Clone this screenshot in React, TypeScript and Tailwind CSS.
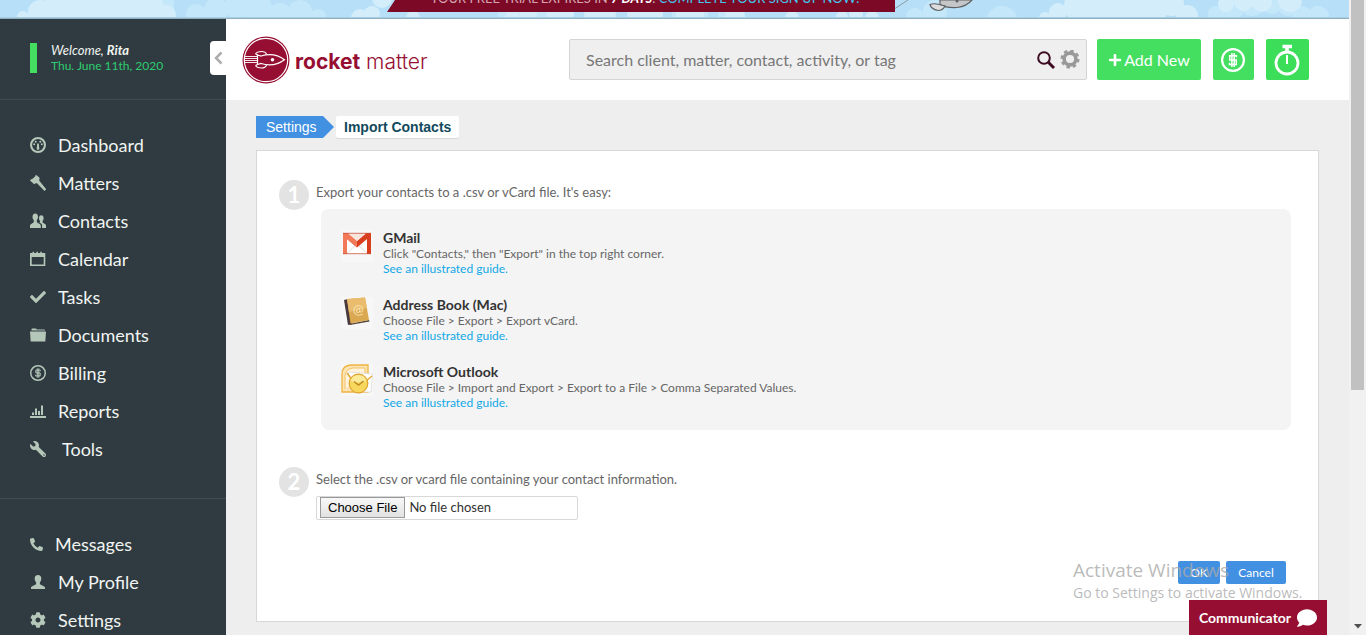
import type { ReactNode } from "react";
import { FaPlus, FaCheck, FaWrench, FaPhoneAlt, FaCog, FaComment } from "react-icons/fa";

type Item = { label: string; icon: ReactNode };

const icon = "size-4 shrink-0 fill-current";

const DashboardIcon = () => (
  <svg viewBox="0 0 16 16" className={icon} aria-hidden="true">
    <path fillRule="evenodd" d="M8 0a8 8 0 1 1 0 16A8 8 0 0 1 8 0Zm0 2.1a5.9 5.9 0 1 0 0 11.8A5.9 5.9 0 0 0 8 2.1Z" />
    <path d="M7.2 6.4h1.6l.5 5.2a1.3 1.3 0 0 1-2.6 0Z" />
    <circle cx="5.7" cy="4.7" r="1" />
    <circle cx="10.3" cy="4.7" r="1" />
    <circle cx="4.2" cy="7.2" r="1" />
    <circle cx="11.8" cy="7.2" r="1" />
  </svg>
);
const HammerIcon = () => (
  <svg viewBox="0 0 16 16" className={icon} aria-hidden="true">
    <path d="M6.300 0 9.800 3 9.300 4 9.300 5.700 16.200 14.200 14.500 16 7 8.300 5.600 8.300 4.200 9.200 0 5.600 1 4.300 1.900 4.300 5.100 1.600 5.200.7Z" />
  </svg>
);
const UsersIcon = () => (
  <svg viewBox="0 0 16 16" className={icon} aria-hidden="true">
    <path d="M5.2.5C7 .5 8 1.8 8 3.8c0 1.600-.5 2.500-1.200 3.300v2.200l3.200 2c.6.4.8.8.8 1.500V15H0v-2.200c0-.7.200-1.100.8-1.500l3-2V7.100C3 6.300 2.500 5.400 2.500 3.800 2.500 1.800 3.500.5 5.200.5Z" />
    <path d="M11.300 2.300c1.500 0 2.300 1.100 2.300 2.800 0 1.300-.4 2.100-1 2.800v1.700l2.700 1.700c.5.300.7.700.7 1.200V15h-3.900v-2.700c0-.8-.4-1.500-1.100-1.900L9.300 9.500 10 9V7.900c-.6-.7-1-1.500-1-2.800 0-1.700.8-2.800 2.300-2.800Z" />
  </svg>
);
const CalendarIcon = () => (
  <svg viewBox="0 0 16 16" className={icon} aria-hidden="true">
    <path fillRule="evenodd" d="M0 2h2.500V.7h1.600V2h2.300V.7H8V2h2.300V.7h1.600V2H15.300V15H0ZM1.700 6v7.500h12V6Z" />
  </svg>
);
const FolderIcon = () => (
  <svg viewBox="0 0 16 16" className={icon} aria-hidden="true">
    <path d="M1.300 3.500 1.800 1.500H6l.8 1h7.800l.4 1Z" />
    <path d="M0 4.400h16L15.300 14.500H.7Z" />
  </svg>
);
const DollarIcon = ({ className }: { className: string }) => (
  <svg viewBox="0 0 24 24" className={className} fill="none" stroke="currentColor" aria-hidden="true">
    <circle cx="12" cy="12" r="10.900" strokeWidth="2.200" />
    <path d="M15.400 9.200V7.700H8.700v4.200h6.600v4.500H8.500V14.700M10.900 5v14M13.200 5v14" strokeWidth="1.500" />
  </svg>
);
const ChartIcon = () => (
  <svg viewBox="0 0 16 16" className={icon} aria-hidden="true">
    <path d="M0 13h16v2H0ZM2 9.500h2V12H2ZM5 5.500h2V12H5ZM8 8h2v4H8ZM11 2.500h2V12h-2Z" />
  </svg>
);
const UserIcon = () => (
  <svg viewBox="0 0 16 16" className={icon} aria-hidden="true">
    <path d="M8 1c2.200 0 3.300 1.500 3.300 3.500 0 1.800-.6 3-1.400 3.800v1.900l4.300 2.300c.6.300.8.800.8 1.400V15H1v-1.100c0-.6.200-1.100.8-1.400l4.300-2.300V8.300C5.300 7.500 4.700 6.300 4.700 4.500 4.700 2.500 5.800 1 8 1Z" />
  </svg>
);

const primary: Item[] = [
  { label: "Dashboard", icon: <DashboardIcon /> },
  { label: "Matters", icon: <HammerIcon /> },
  { label: "Contacts", icon: <UsersIcon /> },
  { label: "Calendar", icon: <CalendarIcon /> },
  { label: "Tasks", icon: <FaCheck className="size-4" /> },
  { label: "Documents", icon: <FolderIcon /> },
  { label: "Billing", icon: <DollarIcon className="size-4" /> },
  { label: "Reports", icon: <ChartIcon /> },
  { label: "Tools", icon: <FaWrench className="mr-1 size-4 -scale-x-100" /> },
];
const secondary: Item[] = [
  { label: "Messages", icon: <FaPhoneAlt className="size-[13px]" /> },
  { label: "My Profile", icon: <UserIcon /> },
  { label: "Settings", icon: <FaCog className="size-4" /> },
];

const Nav = ({ items, label }: { items: Item[]; label: string }) => (
  <nav aria-label={label}>
    {items.map((i) => (
      <a key={i.label} href="#" className="flex h-[38px] items-center gap-3 pl-[30px] text-[18px] text-[#f1f4f2]">
        <span className="text-[#b5c7b9]">{i.icon}</span>
        {i.label}
      </a>
    ))}
  </nav>
);

type Puff = [x: number, y: number, r: number];

const farPuffs: Puff[] = [
  [160, 4, 14], [196, 14, 10], [216, 10, 12], [238, 6, 13], [258, 8, 14], [280, 14, 11], [300, 12, 12], [318, 17, 8],
  [510, 14, 12], [535, 10, 14], [690, 12, 18], [730, 15, 12],
  [915, 17, 9], [935, 12, 12], [1002, 22, 16], [1216, 14, 8], [1232, 8, 12], [1252, 4, 12], [1272, 4, 10], [1288, 6, 10], [1318, 17, 11], [1302, 16, 10],
];
const nearPuffs: Puff[] = [
  [23, 17, 6], [40, 12, 12], [62, 4, 18], [80, 10, 16], [104, 8, 18], [126, 8, 16], [150, 8, 14], [166, 15, 10],
  [382, -2, 10], [413, 18, 7], [360, 18, 9], [372, 14, 8],
  [512, 17, 7], [528, 13, 9], [560, 12, 14], [600, 12, 16], [645, 12, 18], [690, 14, 14], [735, 16, 10],
  [792, 18, 7], [842, 17, 6], [856, 13, 7], [872, 18, 7],
  [1045, 18, 6], [1058, 12, 9], [1080, 6, 16], [1102, 10, 15], [1128, 4, 18], [1152, 8, 16], [1172, 4, 12], [1187, 16, 11],
  [1226, 4, 8], [1244, 1, 10], [1262, 2, 10], [1290, 0, 12],
];

const Clouds = () => (
  <svg className="absolute inset-0 h-full w-full" viewBox="0 0 1349 19" preserveAspectRatio="none" aria-hidden="true">
    <rect width="1349" height="19" fill="#b7e0f8" />
    {farPuffs.map(([x, y, r], i) => <circle key={i} cx={x} cy={y} r={r} fill="#c5e7fa" />)}
    {nearPuffs.map(([x, y, r], i) => <circle key={i} cx={x} cy={y} r={r} fill="#d3edfb" />)}
    <path d="M895 8.500 908 0" stroke="#8997a0" />
    <path d="M940 0h32q-5 6-15 7.500-12 .5-17-3Z" fill="#c4c6c8" stroke="#5f6163" strokeWidth="1.200" />
    <path d="M930 4.500q4-1.500 9 0l6 1.500q-2 4.500-7 4.500-7-1.500-8-6Z" fill="#dcdddf" stroke="#5f6163" strokeWidth="1.200" />
    <circle cx="957" cy="1" r="1.500" fill="#5f6163" />
    <rect y="17" width="1349" height="1" fill="#a9cde1" />
    <rect y="18" width="1349" height="1" fill="#8fb0c3" />
  </svg>
);

const RocketLogo = () => (
  <svg viewBox="0 0 48 48" className="size-12 shrink-0" aria-hidden="true">
    <circle cx="24" cy="24" r="23.500" fill="#960f32" />
    <circle cx="24" cy="24" r="21.700" fill="none" stroke="#fff" strokeWidth="1.200" />
    <g fill="none" stroke="#fff" strokeWidth="1.200">
      <path d="M3 20.500h12M3 22.500h12M3 24.500h12M3 26.500h12" strokeWidth=".9" />
      <path d="M15.500 19v9.500l3.500-1c8 2.500 17 1 23.500-3.800C36 18.800 27 17.500 19 20Z" fill="#960f32" />
      <path d="M13.500 18q1.500-2.500 6-2.500 4 0 5 2.800M13.500 29.500q1.500 2.500 6 2.500 4 0 5-3M13.500 18l2 1M13.500 29.500l2-1" />
    </g>
    <circle cx="30.500" cy="23.700" r="1.800" fill="#fff" />
  </svg>
);

const GmailIcon = () => (
  <svg viewBox="0 0 32 32" className="size-8 shrink-0" aria-hidden="true">
    <rect width="32" height="32" fill="#f7f7f7" />
    <rect x="3" y="4" width="26" height="20" fill="#fff" />
    <path d="m6 23 10-9 10 9" fill="none" stroke="#dedede" />
    <path d="M2 3h5l9 8 9-8h5v21h-4V9L16 17.500 6 9v15H2Z" fill="#d93e1f" />
    <path d="M2 3h5l9 8v6.500L6 9v15H2Z" fill="#f27a58" />
    <path d="M7 3.500h18L16 11Z" fill="#f8e6de" />
    <path d="M2 3.300h28M2 23.700h28" stroke="#c9533c" strokeWidth=".8" />
  </svg>
);
const BookIcon = () => (
  <svg viewBox="0 0 32 32" className="size-8 shrink-0" aria-hidden="true">
    <rect width="32" height="32" fill="#f7f7f7" />
    <path d="m3 3 4-1 4 25-4 1Z" fill="#4a3a3c" />
    <path d="m8 27 20-4 .5 1.500L9 28Z" fill="#4f4238" />
    <path d="M6 2 24 .5 28 23 9.500 26.500Z" fill="#dba852" />
    <path d="M6 2 24 .5 26 11 8 15Z" fill="#e9bd6d" />
    <text x="17.500" y="17" textAnchor="middle" fontSize="13" fill="#fae3b2" fontFamily="Lato, sans-serif" transform="rotate(-8 17 15)">@</text>
  </svg>
);
const OutlookIcon = () => (
  <svg viewBox="0 0 32 32" className="size-8 shrink-0" aria-hidden="true">
    <rect width="32" height="32" fill="#f7f7f7" />
    <path d="M1 28V10Q1 1.500 10 1H27V28Z" fill="#fbe3b4" stroke="#efb440" strokeWidth="1.300" />
    <path d="M4 25V11q1-6 8-7h12v6" fill="#fff3dc" stroke="#f3c369" />
    <path d="M7 8 31.500 10 30 28H13Z" fill="#fff" stroke="#dcdcdc" strokeWidth=".8" />
    <path d="m6 9 6 8M31 12l-6 5" stroke="#e4aa38" strokeWidth="1.500" />
    <circle cx="17.500" cy="19.500" r="9.300" fill="#f8d75e" stroke="#e0a52e" strokeWidth="1.200" />
    <path d="M9.500 17a8.300 8.300 0 0 1 16 0q-8 3-16 0Z" fill="#fcea9b" />
    <path d="m13 17.500 4.500 3.500 5-4" fill="none" stroke="#c08a20" strokeWidth="1.500" />
  </svg>
);

const sources = [
  { title: "GMail", text: 'Click "Contacts," then "Export" in the top right corner.', icon: <GmailIcon /> },
  { title: "Address Book (Mac)", text: "Choose File > Export > Export vCard.", icon: <BookIcon /> },
  { title: "Microsoft Outlook", text: "Choose File > Import and Export > Export to a File > Comma Separated Values.", icon: <OutlookIcon /> },
];

const StepNumber = ({ n }: { n: number }) => (
  <span className="flex size-[30px] shrink-0 items-center justify-center rounded-full bg-[#e3e3e3] text-[22px] leading-none font-bold text-white">
    {n}
  </span>
);

export default function App() {
  return (
    <div className="flex h-screen overflow-hidden bg-[#eeeeee] font-['Lato',sans-serif]">
      <div className="relative flex min-w-0 flex-1 flex-col">
        <div className="relative flex h-[19px] shrink-0 justify-center overflow-hidden pr-[67px]">
          <Clouds />
          <p className="relative flex h-3 w-[508px] items-end justify-center bg-[#7c0a27] pl-2 text-[13px] whitespace-pre text-[#d7a3b0] [clip-path:polygon(8px_0,100%_0,100%_100%,0_100%)]">
            <span className="mb-1">
              YOUR FREE TRIAL EXPIRES IN <b className="text-white italic">7 DAYS</b>. <a href="#" className="text-[#44c6ec]">COMPLETE YOUR SIGN UP NOW!</a>
            </span>
          </p>
        </div>

        <div className="flex min-h-0 flex-1">
          <aside className="flex w-[226px] shrink-0 flex-col overflow-hidden bg-[#2f3b40]">
            <div className="flex h-[81px] shrink-0 items-start border-b border-[#414d4c] pl-[30px]">
              <div className="mt-6 h-[30px] w-[7px] bg-[#44df61]" />
              <div className="mt-6 ml-3.5 text-[12px] leading-[15px] text-[#f1f4f2]">
                <p className="text-[13px] italic">Welcome, <b>Rita</b></p>
                <p className="text-[#2ecc71]">Thu. June 11th, 2020</p>
              </div>
              <button aria-label="Collapse menu" className="mt-[22px] ml-auto flex h-[34px] w-4 items-center justify-center rounded-l bg-white text-[#adadad]">
                <svg viewBox="0 0 10 14" className="h-3.5 w-2.5" fill="none" stroke="currentColor" strokeWidth="2.500" aria-hidden="true">
                  <path d="M8.500 1.500 3 7l5.500 5.500" />
                </svg>
              </button>
            </div>
            <div className="pt-[26px] pb-[30px]">
              <Nav items={primary} label="Main" />
            </div>
            <div className="border-t border-[#414d4c] pt-[26px]">
              <Nav items={secondary} label="Account" />
            </div>
          </aside>

          <div className="flex min-w-0 flex-1 flex-col">
            <header className="flex h-[81px] shrink-0 items-center bg-white pr-10 pl-4">
              <a href="#" className="flex shrink-0 items-center gap-[5px] text-[#960f32]">
                <RocketLogo />
                <span className="pt-1 font-['Inter',sans-serif] text-[21px] leading-6 font-light">
                  <b className="font-bold">rocket</b> matter
                </span>
              </a>
              <div className="ml-auto flex h-[41px] w-full max-w-[518px] items-center gap-1 rounded-xs border border-[#d5d5d5] bg-[#efefef] pr-1.5">
                <input aria-label="Search" placeholder="Search client, matter, contact, activity, or tag" className="h-full min-w-0 flex-1 bg-transparent pl-4 text-[16px] outline-none placeholder:text-[#777777]" />
                <button aria-label="Run search" className="text-[#3d0c20]">
                  <svg viewBox="0 0 20 20" className="size-5" fill="none" stroke="currentColor" aria-hidden="true">
                    <circle cx="8" cy="8" r="5.800" strokeWidth="2" />
                    <path d="m12.300 12.300 5.700 5.700" strokeWidth="3" />
                  </svg>
                </button>
                <button aria-label="Search options" className="text-[#999999]">
                  <svg viewBox="0 0 20 20" className="size-5" aria-hidden="true">
                    <circle cx="10" cy="9" r="5.900" fill="none" stroke="currentColor" strokeWidth="3.600" />
                    <circle cx="10" cy="9" r="8.200" fill="none" stroke="currentColor" strokeWidth="2.600" strokeDasharray="3.400 3.040" />
                  </svg>
                </button>
              </div>
              <button className="ml-2.5 flex h-[41px] w-[104px] shrink-0 items-center justify-center gap-0.5 rounded-xs bg-[#44df61] text-[16px] text-white">
                <FaPlus className="size-3.5" />
                Add New
              </button>
              <button aria-label="Record payment" className="ml-3 flex h-[41px] w-[41px] shrink-0 items-center justify-center rounded-xs bg-[#44df61] pr-px text-white">
                <DollarIcon className="size-6" />
              </button>
              <button aria-label="Start timer" className="ml-3 flex h-[41px] w-[43px] shrink-0 items-center justify-center rounded-xs bg-[#3bdd59] text-white">
                <svg viewBox="0 0 28 32" className="h-8 w-7" fill="none" stroke="currentColor" aria-hidden="true">
                  <circle cx="13" cy="19" r="11" strokeWidth="2.800" />
                  <path d="M8.500 2.500h9.500M13 3v5" strokeWidth="3.600" />
                  <path d="M13 11v9" strokeWidth="2" />
                </svg>
              </button>
            </header>

            <main className="px-[30px] pt-4">
              <nav aria-label="Breadcrumb" className="flex h-[22px] gap-0.5 font-['Liberation_Sans',sans-serif] text-[14px] leading-[22px]">
                <a href="#" className="w-[78px] bg-[#4190e2] pl-2.5 text-white [clip-path:polygon(0_0,67px_0,100%_50%,67px_100%,0_100%)]">Settings</a>
                <span className="rounded-xs bg-white px-2 font-bold text-[#12495c] shadow-[0_1px_0_#d8d8d8]">Import Contacts</span>
              </nav>

              <form className="mt-3 border border-[#d8d8d8] bg-white pt-[29px] pr-[27px] pb-[37px] pl-[22px] text-[13px] text-[#666666]">
                <section className="flex gap-[7px]">
                  <StepNumber n={1} />
                  <div className="flex-1">
                    <h2 className="mb-[5px] leading-6">Export your contacts to a .csv or vCard file. It's easy:</h2>
                    <ul className="ml-[5px] flex flex-col gap-[21px] rounded-lg bg-[#f4f4f4] px-5 pt-[21px] pb-5">
                      {sources.map((s) => (
                        <li key={s.title} className="flex gap-2.5 text-[12px] leading-[15px]">
                          {s.icon}
                          <div>
                            <h3 className="text-[14px] leading-4 font-bold text-[#333333]">{s.title}</h3>
                            <p>{s.text}</p>
                            <a href="#" className="block text-[#12a8e6]">See an illustrated guide.</a>
                          </div>
                        </li>
                      ))}
                    </ul>
                  </div>
                </section>
                <section className="mt-[37px] flex gap-[7px]">
                  <StepNumber n={2} />
                  <div className="flex-1">
                    <label htmlFor="contacts-file" className="mb-[5px] block leading-6">Select the .csv or vcard file containing your contact information.</label>
                    <input id="contacts-file" type="file" className="block h-6 w-[262px] rounded-xs border border-[#d8d8d8] pl-[3px] text-[13px] leading-[21px] text-[#333333] file:mr-1 file:h-[21px] file:border file:border-solid file:border-[#999999] file:bg-linear-to-b file:from-[#f8f8f8] file:to-[#e2e2e2] file:px-[7px] file:font-['Liberation_Sans',sans-serif] file:text-[13px] file:leading-[19px] file:text-black" />
                  </div>
                </section>
                <div className="mt-[41px] mr-[5px] flex justify-end gap-1.5 text-[12px] text-white">
                  <button type="button" className="h-[23px] w-[42px] rounded-xs bg-[#4190e2]">OK</button>
                  <button type="button" className="h-[23px] w-[60px] rounded-xs bg-[#4190e2]">Cancel</button>
                </div>
              </form>
            </main>
          </div>
        </div>

        <div className="pointer-events-none absolute right-10 bottom-8 w-[236px] font-['Open_Sans',sans-serif] whitespace-nowrap text-[#a9a9a9]/80">
          <p className="text-[19px] leading-[26px]">Activate Windows</p>
          <p className="text-[14px] leading-5">Go to Settings to activate Windows.</p>
        </div>
        <button className="absolute right-[22px] bottom-0 flex h-[35px] w-[138px] items-center justify-center gap-1.5 bg-[#960f32] text-[14px] font-bold text-white">
          Communicator
          <FaComment className="size-5" />
        </button>
      </div>

      <div className="flex w-[17px] shrink-0 flex-col items-center justify-between bg-[#f1f1f1]" aria-hidden="true">
        <div className="h-[61.4%] w-[13px] bg-[#c1c1c1]" />
        <svg viewBox="0 0 8 5" className="mb-1.5 h-[5px] w-2 fill-[#505050]"><path d="M0 0h8L4 4.500Z" /></svg>
      </div>
    </div>
  );
}
